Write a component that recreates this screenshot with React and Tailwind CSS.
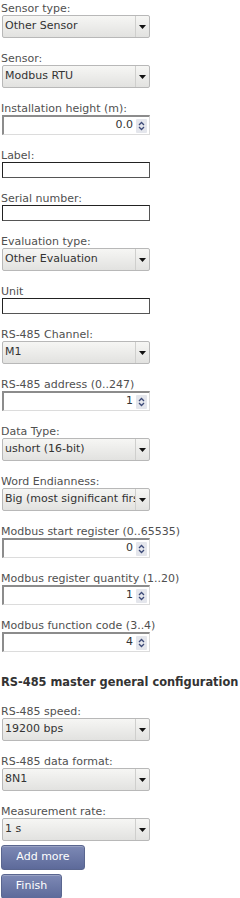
import { useState } from "react";

const font = { fontFamily: '"DejaVu Sans", Verdana, sans-serif' };

const Label = ({ children }) => (
  <div className="text-[11px] leading-[13px] text-[#505050] pl-px whitespace-nowrap">{children}</div>
);

const Select = ({ value }) => (
  <div className="ml-[2px] w-[148px] h-[23px] flex items-stretch rounded-[2px] border border-[#b8b8b8] bg-gradient-to-b from-[#f6f6f4] to-[#e2e2e0] text-[11px] text-[#333]">
    <div className="flex-1 flex items-center pl-[2px] overflow-hidden whitespace-nowrap">
      {value}
    </div>
    <div className="w-[14px] flex items-center justify-center border-l border-[#cfcfcd]">
      <svg width="7" height="4" viewBox="0 0 7 4">
        <path d="M0 0 L7 0 L3.5 4 Z" fill="#111" />
      </svg>
    </div>
  </div>
);

const Spin = ({ value }) => (
  <div className="ml-[2px] w-[148px] h-[20px] flex items-center bg-white border-t-2 border-l-2 border-[#8c8c8c] border-r border-b border-r-[#dcdcdc] border-b-[#dcdcdc] text-[11px] text-[#333]">
    <div className="flex-1 text-right pr-[3px]">{value}</div>
    <div className="w-[11px] h-[14px] mr-[2px] flex items-center justify-center bg-[#e4e6ec] rounded-[1px]">
      <svg width="7" height="10" viewBox="0 0 7 10">
        <path d="M1 4 L3.5 1.5 L6 4" stroke="#3c4a78" strokeWidth="1.3" fill="none" />
        <path d="M1 6 L3.5 8.5 L6 6" stroke="#3c4a78" strokeWidth="1.3" fill="none" />
      </svg>
    </div>
  </div>
);

const TextInput = () => {
  const [v, setV] = useState("");
  return (
    <input
      value={v}
      onChange={(e) => setV(e.target.value)}
      className="ml-[2px] w-[148px] h-[16px] bg-white border border-[#222] border-r-[#555] border-b-[#555] outline-none text-[11px] px-1"
    />
  );
};

const Field = ({ label, children }) => (
  <div className="flex flex-col mb-[14px]">
    <Label>{label}</Label>
    {children}
  </div>
);

const Button = ({ children, w }) => (
  <button
    className={`${w} h-[25px] ml-px rounded-[3px] border border-[#5a668f] bg-gradient-to-b from-[#7d89b5] to-[#5d6a9a] text-white text-[11px] shadow-[0_1px_0_#9aa3c4_inset]`}
  >
    {children}
  </button>
);

export default function App() {
  return (
    <div className="w-[240px] h-[898px] bg-white overflow-hidden pt-[2px]" style={font}>
      <Field label="Sensor type:">
        <Select value="Other Sensor" />
      </Field>
      <Field label="Sensor:">
        <Select value="Modbus RTU" />
      </Field>
      <Field label="Installation height (m):">
        <Spin value="0.0" />
      </Field>
      <Field label="Label:">
        <TextInput />
      </Field>
      <Field label="Serial number:">
        <TextInput />
      </Field>
      <Field label="Evaluation type:">
        <Select value="Other Evaluation" />
      </Field>
      <Field label="Unit">
        <TextInput />
      </Field>
      <Field label="RS-485 Channel:">
        <Select value="M1" />
      </Field>
      <Field label="RS-485 address (0..247)">
        <Spin value="1" />
      </Field>
      <Field label="Data Type:">
        <Select value="ushort (16-bit)" />
      </Field>
      <Field label="Word Endianness:">
        <Select value="Big (most significant first)" />
      </Field>
      <Field label="Modbus start register (0..65535)">
        <Spin value="0" />
      </Field>
      <Field label="Modbus register quantity (1..20)">
        <Spin value="1" />
      </Field>
      <Field label="Modbus function code (3..4)">
        <Spin value="4" />
      </Field>

      <h3 className="mt-[22px] mb-[14px] pl-px text-[11.4px] font-bold text-[#333] whitespace-nowrap">
        RS-485 master general configuration
      </h3>

      <Field label="RS-485 speed:">
        <Select value="19200 bps" />
      </Field>
      <Field label="RS-485 data format:">
        <Select value="8N1" />
      </Field>
      <div className="flex flex-col">
        <Label>Measurement rate:</Label>
        <Select value="1 s" />
      </div>
      <div className="flex flex-col gap-[4px] mt-[4px]">
        <Button w="w-[84px]">Add more</Button>
        <Button w="w-[61px]">Finish</Button>
      </div>
    </div>
  );
}
